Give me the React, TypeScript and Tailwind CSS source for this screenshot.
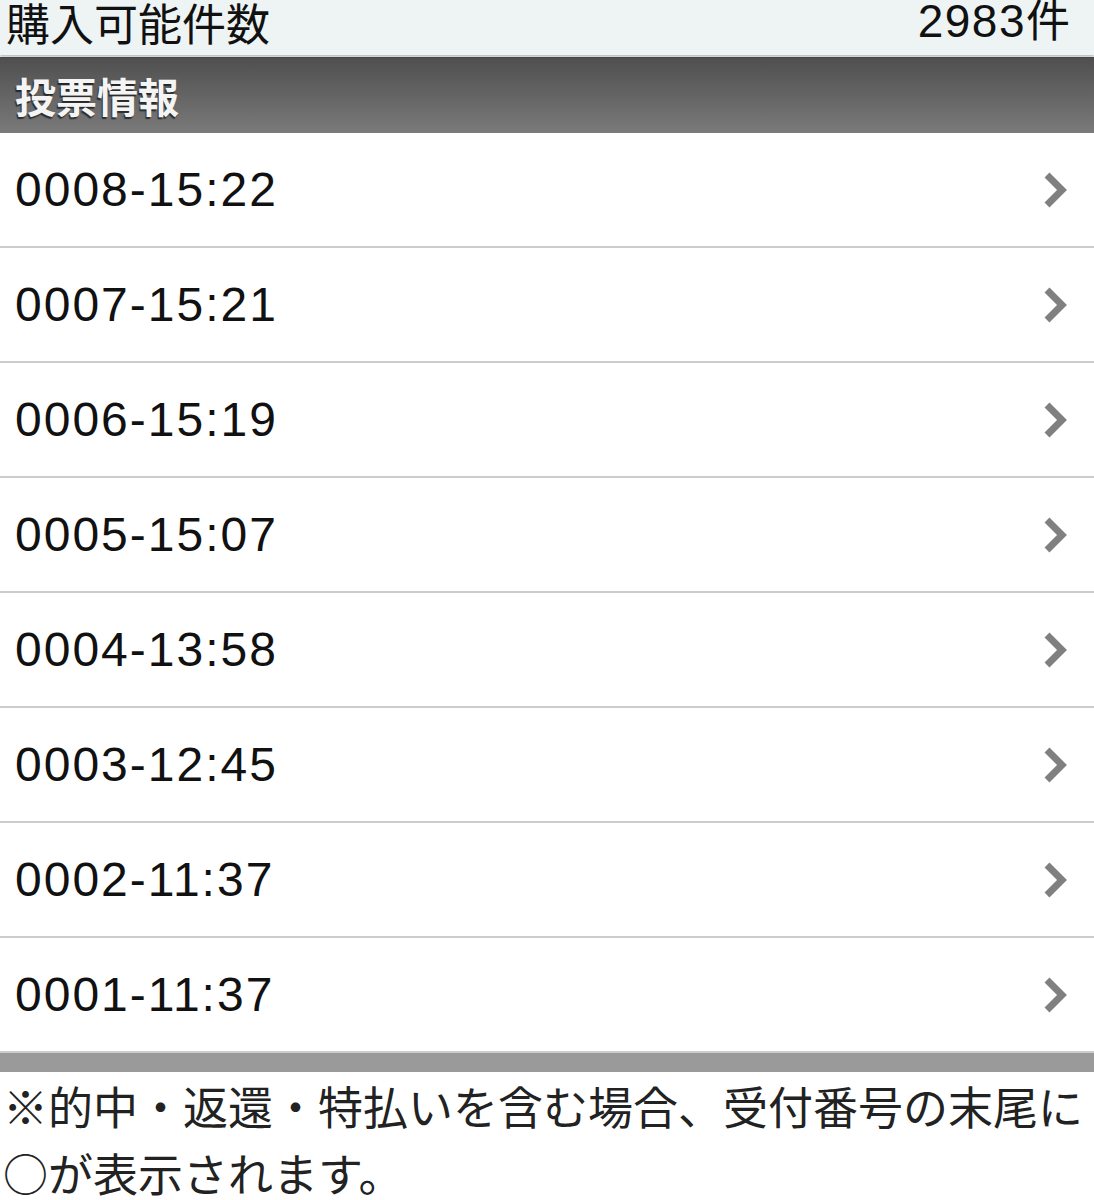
const rows = [
  '0008-15:22',
  '0007-15:21',
  '0006-15:19',
  '0005-15:07',
  '0004-13:58',
  '0003-12:45',
  '0002-11:37',
  '0001-11:37',
];

const jp = "font-['Noto_Sans_CJK_JP',sans-serif]";

function Chevron() {
  return (
    <svg width="26" height="38" viewBox="0 0 26 38" className="shrink-0">
      <path d="M5 4 L20 19 L5 34" fill="none" stroke="#808080" strokeWidth="7" strokeLinejoin="miter" />
    </svg>
  );
}

export default function App() {
  return (
    <div className="w-[1094px] h-[1200px] overflow-hidden bg-white">
      <div className="relative z-10 flex h-[55px] items-end justify-between bg-[#eef4f4] pl-[6px] pr-[24px] shadow-[0_2px_2px_rgba(0,0,0,0.25)]">
        <span className={`${jp} mb-[11px] text-[44px] leading-none text-[#111]`}>購入可能件数</span>
        <span className={`${jp} mb-[11px] text-[44px] leading-none text-[#111]`}>
          <span className="font-['Liberation_Sans',sans-serif] text-[46px] tracking-[1.5px]">2983</span>件
        </span>
      </div>
      <div className="mt-[2px] flex h-[76px] items-center bg-gradient-to-b from-[#4f4f4f] to-[#7a7a7a] px-[15px]">
        <span className={`${jp} text-[41px] font-bold leading-none text-[#f4f4f4] [text-shadow:-1px_2px_1px_rgba(0,0,0,0.6)]`}>
          投票情報
        </span>
      </div>
      <ul>
        {rows.map((r) => (
          <li key={r} className="flex h-[115px] items-center justify-between border-b-2 border-[#cccccc] pl-[15px] pr-[26px]">
            <span className="font-['Liberation_Sans',sans-serif] text-[48px] leading-none tracking-[2px] text-[#111]">{r}</span>
            <Chevron />
          </li>
        ))}
      </ul>
      <div className="h-[19px] bg-[#9a9a9a]" />
      <p className={`${jp} px-[3px] text-[45px] leading-[67px] text-[#222]`}>
        ※的中・返還・特払いを含む場合、受付番号の末尾に○が表示されます。
      </p>
    </div>
  );
}
